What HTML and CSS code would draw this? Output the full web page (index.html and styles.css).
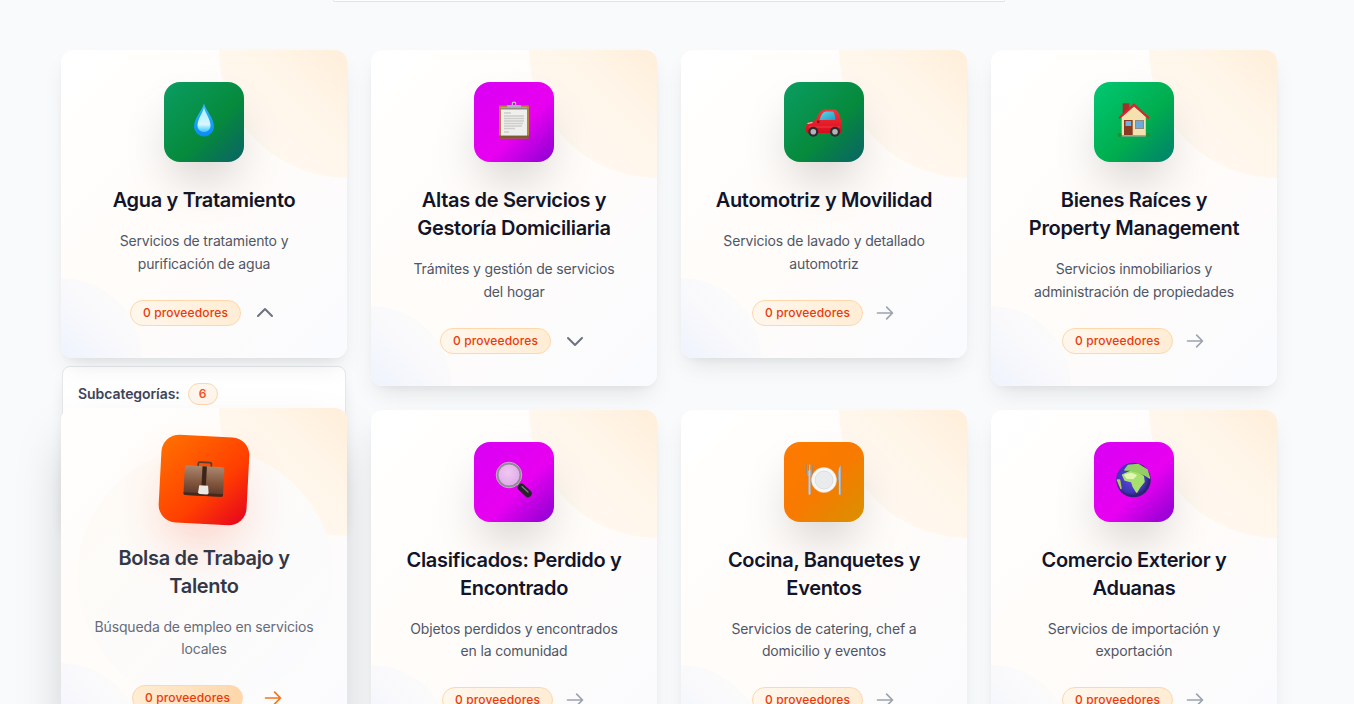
FILE: index.html
```html
<!DOCTYPE html>
<html lang="es">
<head>
<meta charset="utf-8">
<title>Categorías</title>
<link rel="stylesheet" href="styles.css">
</head>
<body>
<svg class="defs" width="0" height="0" aria-hidden="true">
  <defs>
    <linearGradient id="drop" x1="0" y1="0" x2="0" y2="1"><stop offset="0" stop-color="#35b8f5"/><stop offset=".6" stop-color="#12a0fa"/><stop offset="1" stop-color="#0a8af5"/></linearGradient>
    <linearGradient id="dropin" x1="0" y1="0" x2="0" y2="1"><stop offset="0" stop-color="#a8ecff"/><stop offset=".7" stop-color="#d6f7ff"/><stop offset="1" stop-color="#38c4ff"/></linearGradient>
    <linearGradient id="leather" x1="0" y1="0" x2="0" y2="1"><stop offset="0" stop-color="#ab8770"/><stop offset=".55" stop-color="#82573f"/><stop offset="1" stop-color="#5a3527"/></linearGradient>
    <linearGradient id="carbody" x1="0" y1="0" x2="0" y2="1"><stop offset="0" stop-color="#f8343c"/><stop offset="1" stop-color="#d80c1c"/></linearGradient>
    <linearGradient id="glass" x1="0" y1="0" x2="1" y2="1"><stop offset="0" stop-color="#62d6e6"/><stop offset="1" stop-color="#1c9fc7"/></linearGradient>
    <linearGradient id="metal" x1="0" y1="0" x2="1" y2="0"><stop offset="0" stop-color="#7f8a94"/><stop offset=".5" stop-color="#c6ccd2"/><stop offset="1" stop-color="#7f8a94"/></linearGradient>
    <radialGradient id="ocean" cx=".45" cy=".45"><stop offset="0" stop-color="#5c4ae6"/><stop offset=".8" stop-color="#4035b8"/><stop offset="1" stop-color="#2a2478"/></radialGradient>
    <radialGradient id="lens" cx=".45" cy=".4"><stop offset="0" stop-color="#efc8f2"/><stop offset="1" stop-color="#e2aeea"/></radialGradient>
    <symbol id="arrow" viewBox="0 0 24 24"><path d="M14 5l7 7-7 7M3 12h18" fill="none" stroke="currentColor" stroke-width="2" stroke-linecap="round" stroke-linejoin="round"/></symbol>
    <symbol id="chev-up" viewBox="0 0 24 24"><path d="M5 15l7-7 7 7" fill="none" stroke="currentColor" stroke-width="2" stroke-linecap="round" stroke-linejoin="round"/></symbol>
    <symbol id="chev-down" viewBox="0 0 24 24"><path d="M19 9l-7 7-7-7" fill="none" stroke="currentColor" stroke-width="2" stroke-linecap="round" stroke-linejoin="round"/></symbol>
  </defs>
</svg>
<main class="page">
  <div class="search-edge"></div>
  <section class="grid">

    <div class="cell">
      <article class="card">
        <div class="icon g-water">
          <svg class="emoji" viewBox="0 0 36 36"><path d="M18 -.500C20 7 28 14 28 22.500a10 10 0 0 1-20 0C8 14 16 7 18 -.500z" fill="url(#drop)"/><path d="M18 3C19 9 24.500 15 24.500 21.500c0 4-3 6.500-6.500 6.500s-6.500-2.500-6.500-6.500C11.500 15 17 9 18 3z" fill="url(#dropin)"/></svg>
        </div>
        <h2 class="title">Agua y Tratamiento</h2>
        <p class="desc">Servicios de tratamiento y purificación de agua</p>
        <div class="foot">
          <span class="badge">0 proveedores</span>
          <svg class="chev"><use href="#chev-up"/></svg>
        </div>
      </article>
      <div class="panel">
        <span class="panel-label">Subcategorías:</span>
        <span class="count">6</span>
      </div>
    </div>

    <article class="card">
      <div class="icon g-magenta">
        <svg class="emoji" viewBox="0 0 36 36"><rect x="3" y="1.500" width="30" height="33" rx="1" fill="#b5813f"/><rect x="3" y="31.500" width="30" height="3" fill="#7e5a30"/><rect x="5" y="3.500" width="26" height="28" fill="#efefed"/><rect x="5" y="3.500" width="26" height="2" fill="#8f8a84"/><path d="M8 9h7M8 12h20M8 14.500h20M8 17h20M8 19.500h19M8 22h18M8 24.500h11M8 28h5" stroke="#cdcdcb" stroke-width="1.500"/><circle cx="18" cy="0" r="1.800" fill="none" stroke="#bcbcc8" stroke-width="1.200"/><rect x="11" y="1" width="14" height="2.500" rx="1" fill="#b0b0ba"/></svg>
      </div>
      <h2 class="title">Altas de Servicios y Gestoría Domiciliaria</h2>
      <p class="desc">Trámites y gestión de servicios del hogar</p>
      <div class="foot">
        <span class="badge">0 proveedores</span>
        <svg class="chev"><use href="#chev-down"/></svg>
      </div>
    </article>

    <article class="card">
      <div class="icon g-water">
        <svg class="emoji" viewBox="0 0 36 36"><path d="M0 24C0 20 2 18.500 5 17.500L10 16C12 10 15 5.500 20 5.500H28C31 5.500 33.500 9 34.500 15C35.500 16 36 18 36 22V27C36 28 35 29 34 29H2C1 29 0 28 0 27z" fill="url(#carbody)"/><path d="M13.500 16C15 11 17 7.500 20 7.500H26C28 7.500 29 10 29.500 16z" fill="url(#glass)"/><path d="M11 16.500h2.500v2.500H11z" fill="#9a0a14"/><path d="M1.500 19.500l5-1" stroke="#fff" stroke-width="1.200" opacity=".8"/><path d="M3 23h31" stroke="#ff7a7a" stroke-width=".8" opacity=".5"/><circle cx="7.300" cy="27.700" r="5" fill="#2c2c30"/><circle cx="7.300" cy="27.700" r="2.800" fill="#b4b4b8"/><circle cx="29" cy="27.700" r="5" fill="#2c2c30"/><circle cx="29" cy="27.700" r="2.800" fill="#b4b4b8"/></svg>
      </div>
      <h2 class="title">Automotriz y Movilidad</h2>
      <p class="desc">Servicios de lavado y detallado automotriz</p>
      <div class="foot">
        <span class="badge">0 proveedores</span>
        <svg class="arrow"><use href="#arrow"/></svg>
      </div>
    </article>

    <article class="card">
      <div class="icon g-green">
        <svg class="emoji" viewBox="0 0 36 36"><rect x="6.700" y="-.700" width="6.600" height="11" fill="#a5302a"/><path d="M5.700 13L18 2l11.800 11v18.700H5.700z" fill="#f5e1ae"/><path d="M2.300 13.500L18 -.700 33.800 13.500 32.500 15 18 2.500 3.500 15z" fill="#e0202c"/><rect x="8" y="16" width="8.700" height="15.700" fill="#8a3a22"/><rect x="9.500" y="17" width="5.700" height="5" fill="#6cb2e8"/><rect x="19" y="16" width="9" height="9" fill="#8d8a86"/><rect x="20" y="17" width="7" height="7" fill="#6ea9dc"/><rect x="5.700" y="31" width="24" height="1.600" fill="#a8a49a"/><circle cx="3.800" cy="31" r="1.900" fill="#2a8a2c"/><circle cx="32" cy="31" r="1.900" fill="#2a8a2c"/></svg>
      </div>
      <h2 class="title">Bienes Raíces y Property Management</h2>
      <p class="desc">Servicios inmobiliarios y administración de propiedades</p>
      <div class="foot">
        <span class="badge">0 proveedores</span>
        <svg class="arrow"><use href="#arrow"/></svg>
      </div>
    </article>

    <article class="card card-hover">
      <div class="hover-glow"></div>
      <div class="icon g-red">
        <svg class="emoji" viewBox="0 0 36 36"><path d="M12 6.500V3.500c0-1 .8-1.500 1.500-1.500h9c.8 0 1.500.5 1.500 1.500v3" fill="none" stroke="#5e3a2a" stroke-width="1.600"/><rect x="0" y="5.500" width="36" height="27" rx="2" fill="url(#leather)"/><rect x="16" y="5.500" width="4" height="19" fill="#3e2418"/><path d="M0 30h36v1c0 1-1 1.500-2 1.500H2c-1 0-2-.5-2-1.500z" fill="#43281c"/><path d="M14 23h8l.8 6.500c0 .8-1 1.500-1.800 1.500h-6c-.8 0-1.800-.7-1.800-1.500z" fill="#ebe9e3"/></svg>
      </div>
      <h2 class="title">Bolsa de Trabajo y Talento</h2>
      <p class="desc">Búsqueda de empleo en servicios locales</p>
      <div class="foot">
        <span class="badge">0 proveedores</span>
        <svg class="arrow"><use href="#arrow"/></svg>
      </div>
    </article>

    <article class="card">
      <div class="icon g-magenta">
        <svg class="emoji" viewBox="0 0 36 36"><path d="M21 20l3 3" stroke="#777" stroke-width="2.500"/><path d="M25.500 23.500l6.500 6" stroke="#24242a" stroke-width="7.500" stroke-linecap="round"/><path d="M26 22.500l6 5.500" stroke="#7c7c84" stroke-width="1.200" stroke-linecap="round"/><circle cx="13" cy="11" r="11.500" fill="url(#lens)" stroke="#8d8d94" stroke-width="2"/><circle cx="13" cy="11" r="12.800" fill="none" stroke="#c6c6cc" stroke-width=".8"/></svg>
      </div>
      <h2 class="title">Clasificados: Perdido y Encontrado</h2>
      <p class="desc">Objetos perdidos y encontrados en la comunidad</p>
      <div class="foot">
        <span class="badge">0 proveedores</span>
        <svg class="arrow"><use href="#arrow"/></svg>
      </div>
    </article>

    <article class="card">
      <div class="icon g-orange">
        <svg class="emoji" viewBox="0 0 36 36"><circle cx="18" cy="16" r="12.500" fill="#f8f8f7" stroke="#dcdcda" stroke-width=".5"/><circle cx="18" cy="16" r="9" fill="#e9ebed" stroke="#d6d9db" stroke-width=".8"/><path d="M.3.500v8c0 2 1 3 2 3.500L2.300 29.500a1.300 1.300 0 0 0 2.600 0L4.700 12c1-.5 1.900-1.500 1.900-3.500V.500H5.700v6H4.400v-6H3v6H1.600v-6z" fill="url(#metal)"/><path d="M35.800.500C32.500 3 31.300 9 31.300 16.500h1.400V29.500a1.400 1.400 0 0 0 2.900 0z" fill="url(#metal)"/></svg>
      </div>
      <h2 class="title">Cocina, Banquetes y Eventos</h2>
      <p class="desc">Servicios de catering, chef a domicilio y eventos</p>
      <div class="foot">
        <span class="badge">0 proveedores</span>
        <svg class="arrow"><use href="#arrow"/></svg>
      </div>
    </article>

    <article class="card">
      <div class="icon g-magenta">
        <svg class="emoji" viewBox="0 0 36 36"><circle cx="17.500" cy="16" r="17.300" fill="url(#ocean)"/><g stroke-linejoin="round" stroke-width="1.500"><path d="M6.700 11L14 7.700 20.700 8 27.300 12.700 28 17.700 24 22.700 20.700 28 17.300 22.700 15.700 17.700 9 16z" fill="#a8e070" stroke="#a8e070"/><path d="M12.300 1.500L22 .5 31 6 33.500 14 29 11 20.700 7.700 14 6 9 6z" fill="#93cf62" stroke="#93cf62"/><path d="M1.500 16L5 24.500 3.500 16z" fill="#b4c860" stroke="#b4c860"/><path d="M9 11l6-1.500 5 2-3 3-6-.500z" fill="#e2f6b4" stroke="#e2f6b4"/></g></svg>
      </div>
      <h2 class="title">Comercio Exterior y Aduanas</h2>
      <p class="desc">Servicios de importación y exportación</p>
      <div class="foot">
        <span class="badge">0 proveedores</span>
        <svg class="arrow"><use href="#arrow"/></svg>
      </div>
    </article>

  </section>
</main>
</body>
</html>
```

FILE: styles.css
```css
* { box-sizing: border-box; }
html, body { margin: 0; padding: 0; height: 704px; overflow: hidden; }
body { background: #f9fafc; font-family: Inter, "Liberation Sans", sans-serif; color: #111827; }
.defs { position: absolute; }
.page { width: 1338px; padding: 0 61px; }
.search-edge { width: 672px; height: 2px; margin: 0 auto 48px; background: #fff; border: 1px solid #e5e1e1; border-top: 0; border-radius: 0 0 8px 8px; }
.grid { display: grid; grid-template-columns: repeat(4, 286px); gap: 24px; align-items: start; }
.cell { position: relative; }

.card { position: relative; overflow: hidden; display: flex; flex-direction: column; align-items: center; padding: 32px; border-radius: 12px; text-align: center; background: linear-gradient(135deg, #ffffff 0%, #fffcf9 50%, #fafbff 100%); box-shadow: 0 12px 24px -6px rgba(0,0,0,.1), 0 4px 8px -4px rgba(0,0,0,.06); }
.card > * { position: relative; }
.card::before { content: ""; position: absolute; top: -128px; right: -128px; width: 256px; height: 256px; border-radius: 50%; background: linear-gradient(225deg, #ffeeda 50%, #fff6ea 68%, #fffaf5 100%); }
.card::after { content: ""; position: absolute; left: -80px; bottom: -80px; width: 160px; height: 160px; border-radius: 50%; background: linear-gradient(45deg, #eef3fd 50%, #f9f9fc 72%, #fdfcfb 100%); }

.icon { width: 80px; height: 80px; border-radius: 16px; display: flex; align-items: center; justify-content: center; box-shadow: 0 25px 50px -12px rgba(0,0,0,.22); z-index: 1; }
.emoji { width: 36px; height: 36px; display: block; overflow: visible; }
.g-water { background: linear-gradient(135deg, #0a9d63 0%, #068a3c 58%, #0a6366 100%); }
.g-green { background: linear-gradient(135deg, #00c872 0%, #00ad4e 58%, #007f6d 100%); }
.g-magenta { background: linear-gradient(135deg, #d900f5 0%, #e800f0 58%, #8a00d0 100%); }
.g-orange { background: linear-gradient(135deg, #ff7a00 0%, #f87a00 50%, #d99000 100%); }
.g-red { background: linear-gradient(135deg, #ff7300 0%, #ff3f00 60%, #e6001f 100%); }

.title { margin: 24px 0 0; font-size: 20px; line-height: 28px; font-weight: 600; letter-spacing: -.33px; color: #12142a; z-index: 1; }
.desc { margin: 16px 0 0; font-size: 14px; line-height: 22.75px; letter-spacing: -.15px; color: #4f5666; z-index: 1; }
.foot { display: flex; align-items: center; gap: 12px; margin: 24px 1px 0 0; z-index: 1; }
.badge { display: block; width: 111px; height: 26px; line-height: 24px; border: 1px solid #fed7aa; border-radius: 13px; background: linear-gradient(90deg, #fff7ed, #ffedd5); color: #ea3a0a; font-size: 12px; font-weight: 500; letter-spacing: .15px; white-space: nowrap; }
.arrow { width: 20px; height: 20px; color: #9ca3af; }
.chev { width: 24px; height: 24px; color: #6b7280; }

.card-hover { margin-top: -2px; box-shadow: 0 25px 50px -12px rgba(0,0,0,.25); background: linear-gradient(135deg, #fffefd 0%, #fffcf9 50%, #fafbff 100%); }
.card-hover .title { color: #333849; }
.card-hover .desc { color: #666c7a; }
.card-hover .arrow { color: #f97316; transform: translateX(8px); }
.card-hover .badge { background: linear-gradient(90deg, #ffedd5, #fed7aa); }
.card-hover .icon { transform: scale(1.1) rotate(3deg); box-shadow: 0 25px 50px -12px rgba(249,60,22,.3); }
.hover-glow { position: absolute !important; left: 16px; top: 40px; width: 256px; height: 256px; border-radius: 50%; background: linear-gradient(135deg, #fffbf5, #fafbff); }

.panel { position: absolute; top: 316px; left: 1px; right: 1px; height: 160px; padding: 16px 15px; display: flex; align-items: flex-start; gap: 8px; border: 1px solid #e5e7eb; border-radius: 8px; background: #fff; box-shadow: 0 10px 15px -3px rgba(0,0,0,.1); z-index: -1; font-size: 14px; line-height: 22px; }
.panel-label { font-weight: 600; letter-spacing: -.07px; color: #3f4558; }
.count { width: 30px; height: 22px; text-align: center; border: 1px solid #fed7aa; border-radius: 11px; background: #fff7ed; color: #f4551c; font-size: 12px; line-height: 20px; font-weight: 600; }
```
